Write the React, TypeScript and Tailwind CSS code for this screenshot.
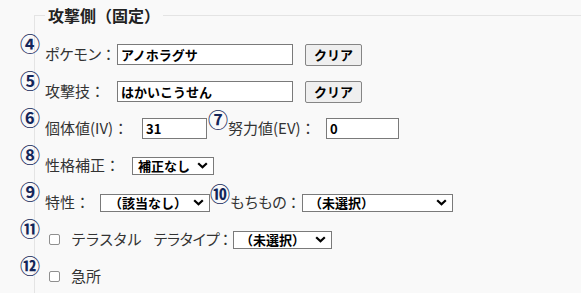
const jp = "font-['Noto_Sans_CJK_JP','Noto_Sans',sans-serif]";

function Mark({ n }: { n: string }) {
  return (
    <span className="absolute left-[-25px] top-[-2px] text-[20px] leading-[20px] font-bold text-[#14265a]">
      {n}
    </span>
  );
}

function InlineMark({ n }: { n: string }) {
  return (
    <span className="relative inline-block shrink-0 w-[20px] h-[20px] self-start mt-[0px] text-[20px] leading-[20px] font-bold text-[#14265a] text-center">
      {n}
    </span>
  );
}

function Chevron() {
  return (
    <svg width="11" height="7" viewBox="0 0 11 7" className="shrink-0">
      <path d="M1.2 1.2 L5.5 5.3 L9.8 1.2" fill="none" stroke="#000" strokeWidth="2.2" />
    </svg>
  );
}

function Select({ value, w, pad, center }: { value: string; w: string; pad: string; center?: boolean }) {
  return (
    <div
      className={`flex shrink-0 items-center h-[18px] border border-[#7a7a7a] bg-white text-[13px] font-bold text-black leading-none pr-[5px] ${w} ${pad}`}
    >
      <span className={`flex-1 whitespace-nowrap ${center ? "text-center" : ""}`}>{value}</span>
      <Chevron />
    </div>
  );
}

function TextBox({ value, w }: { value: string; w: string }) {
  return (
    <div className={`shrink-0 h-[21px] border border-[#7a7a7a] bg-white text-[13px] font-bold text-black leading-[19px] pl-[3px] ${w}`}>
      {value}
    </div>
  );
}

function ClearButton() {
  return (
    <button className="shrink-0 ml-[12px] h-[22px] w-[57px] border border-[#858585] rounded-[2px] bg-[#efefef] text-[13px] font-bold text-black leading-none">
      クリア
    </button>
  );
}

function CheckBox() {
  return <span className="shrink-0 ml-[4px] mr-[11px] w-[11px] h-[11px] border border-[#8f8f8f] rounded-[2px] bg-white" />;
}

export default function App() {
  return (
    <div className={`h-[293px] w-[581px] overflow-hidden bg-[#f9f9f9] pt-[6px] pl-[34px] text-[#333] ${jp}`}>
      <fieldset className="border-t border-l border-[#e4e4e4] pl-[10px] pt-[12px] h-[320px]">
        <legend className="px-[3px] text-[16px] leading-[18px] font-bold text-[#222]">攻撃側（固定）</legend>

        <div className="relative flex items-center h-[37px]">
          <Mark n="④" />
          <span className="shrink-0 w-[72px] text-[15px] tracking-[-1px] whitespace-nowrap">ポケモン：</span>
          <TextBox value="アノホラグサ" w="w-[176px]" />
          <ClearButton />
        </div>

        <div className="relative flex items-center h-[37px]">
          <Mark n="⑤" />
          <span className="shrink-0 w-[72px] text-[15px] whitespace-nowrap">攻撃技：</span>
          <TextBox value="はかいこうせん" w="w-[176px]" />
          <ClearButton />
        </div>

        <div className="relative flex items-center h-[37px]">
          <Mark n="⑥" />
          <span className="shrink-0 w-[97px] text-[15px] whitespace-nowrap">個体値(IV)：</span>
          <TextBox value="31" w="w-[65px]" />
          <span className="w-[1px] shrink-0" />
          <InlineMark n="⑦" />
          <span className="shrink-0 w-[98px] text-[15px] whitespace-nowrap">努力値(EV)：</span>
          <TextBox value="0" w="w-[73px]" />
        </div>

        <div className="relative flex items-center h-[37px]">
          <Mark n="⑧" />
          <span className="shrink-0 w-[87px] text-[15px] whitespace-nowrap">性格補正：</span>
          <Select value="補正なし" w="w-[82px]" pad="pl-[5px]" />
        </div>

        <div className="relative flex items-center h-[37px]">
          <Mark n="⑨" />
          <span className="shrink-0 w-[55px] text-[15px] whitespace-nowrap">特性：</span>
          <Select value="（該当なし）" w="w-[110px]" pad="pl-[2px]" center />
          <InlineMark n="⑩" />
          <span className="shrink-0 w-[72px] text-[15px] tracking-[-1px] whitespace-nowrap">もちもの：</span>
          <Select value="（未選択）" w="w-[151px]" pad="pl-[6px]" />
        </div>

        <div className="relative flex items-center h-[37px]">
          <Mark n="⑪" />
          <CheckBox />
          <span className="shrink-0 w-[82px] text-[15px] tracking-[-1px] whitespace-nowrap">テラスタル</span>
          <span className="shrink-0 w-[80px] text-[15px] tracking-[-2px] whitespace-nowrap">テラタイプ：</span>
          <Select value="（未選択）" w="w-[99px]" pad="pl-[6px]" />
        </div>

        <div className="relative flex items-center h-[37px]">
          <Mark n="⑫" />
          <CheckBox />
          <span className="text-[15px] whitespace-nowrap">急所</span>
        </div>
      </fieldset>
    </div>
  );
}
